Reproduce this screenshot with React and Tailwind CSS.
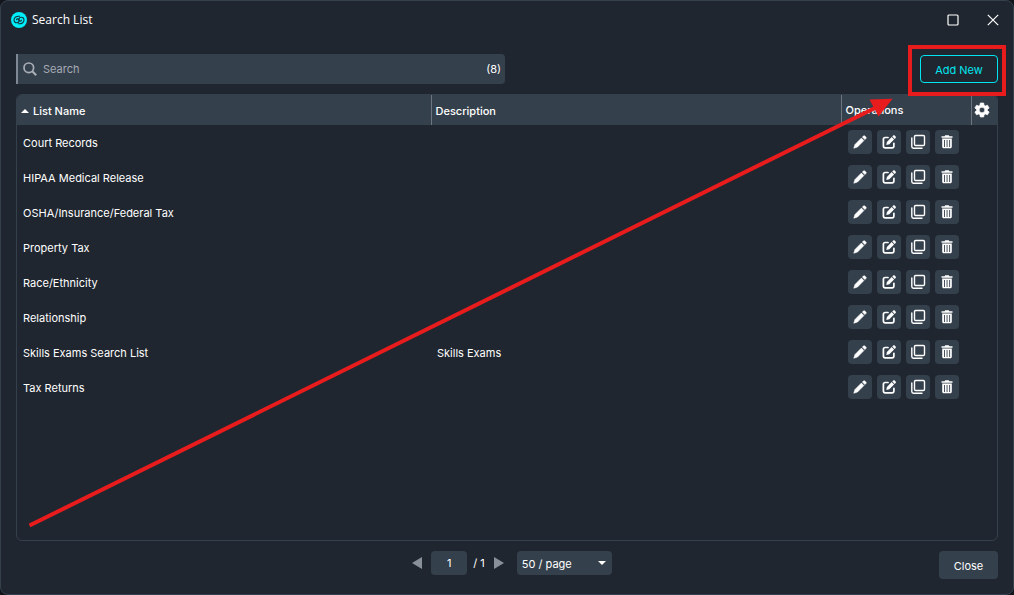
import React, { useState } from 'react';

const LISTS = [
  { name: 'Court Records', description: '' },
  { name: 'HIPAA Medical Release', description: '' },
  { name: 'OSHA/Insurance/Federal Tax', description: '' },
  { name: 'Property Tax', description: '' },
  { name: 'Race/Ethnicity', description: '' },
  { name: 'Relationship', description: '' },
  { name: 'Skills Exams Search List', description: 'Skills Exams' },
  { name: 'Tax Returns', description: '' },
];

function LogoIcon() {
  return (
    <svg className="size-4" viewBox="0 0 16 16" fill="none" aria-hidden="true">
      <circle cx="8" cy="8" r="8" fill="#00eefa" />
      <g stroke="#12303c" strokeWidth="1.1" strokeLinecap="round">
        <path d="M8.600 4.300C5.500 3.800 3 5.600 3 8c0 2 1.600 3 3.100 2.700 1.700-.3 2.200-1.700 2-2.800-.3-1.300-2.300-1.500-2.600-.1" />
        <path d="M7.400 11.700c3.100.5 5.600-1.300 5.600-3.700 0-2-1.600-3-3.100-2.700-1.700.3-2.200 1.700-2 2.800.3 1.300 2.300 1.500 2.600.1" />
      </g>
    </svg>
  );
}

function PencilIcon() {
  return (
    <svg className="size-4" viewBox="0 0 16 16" fill="currentColor" stroke="currentColor" strokeWidth=".6" strokeLinejoin="round" aria-hidden="true">
      <path d="M1.800 14.200l1.200-3.700 6.400-6.400 2.500 2.500-6.400 6.400z" />
      <path d="M10.400 3.100l1-1c.5-.5 1-.5 1.500 0l1 1c.5.5.5 1 0 1.500l-1 1z" />
    </svg>
  );
}

function EditIcon() {
  return (
    <svg className="size-4" viewBox="0 0 16 16" fill="currentColor" aria-hidden="true">
      <path
        d="M7 3.500H4.200c-1.100 0-1.800.7-1.800 1.700v6.900c0 1 .7 1.700 1.800 1.700h6.900c1.100 0 1.800-.7 1.800-1.700V9.300"
        fill="none"
        stroke="currentColor"
        strokeWidth="1.700"
        strokeLinecap="round"
      />
      <path d="M5.300 10.900l.6-3 4.800-4.800 2.400 2.400-4.800 4.800z" />
      <path d="M11.300 2.500l.9-.9c.5-.5 1-.5 1.500 0l.9.9c.5.5.5 1 0 1.500l-.9.9z" />
    </svg>
  );
}

function CopyIcon() {
  return (
    <svg className="size-4" viewBox="0 0 16 16" fill="none" stroke="currentColor" aria-hidden="true">
      <rect x="4.500" y="1.500" width="10" height="10" rx="1.200" strokeWidth="1.400" />
      <path d="M1.800 4v8.600c0 1 .6 1.600 1.600 1.600H12" strokeWidth="1.400" strokeLinecap="round" />
    </svg>
  );
}

function TrashIcon() {
  return (
    <svg className="size-4" viewBox="0 0 16 16" fill="currentColor" aria-hidden="true">
      <path d="M5.600 2.200l.6-.9h3.600l.6.9h3.100v1.500h-11V2.200z" />
      <path
        fillRule="evenodd"
        d="M3.200 4.600h9.600v8.200c0 .9-.6 1.500-1.500 1.500H4.700c-.9 0-1.500-.6-1.500-1.500zM5 6v7h.9V6zm2.600 0v7h.9V6zm2.600 0v7h.9V6z"
      />
    </svg>
  );
}

function GearIcon() {
  return (
    <svg className="size-4" viewBox="0 0 24 24" fill="currentColor" stroke="currentColor" strokeLinejoin="round" aria-hidden="true">
      <path
        d="M9.500 1.500h5l.6 3.300 1.900 1.100 3.200-1.200 2.500 4.300-2.600 2.100v1.800l2.600 2.100-2.500 4.300-3.200-1.200-1.900 1.100-.6 3.300h-5l-.6-3.300L7 18.100l-3.200 1.200L1.300 15l2.600-2.100v-1.800L1.300 9l2.500-4.300L7 5.900l1.900-1.100zM12 7.800a4.200 4.200 0 100 8.400 4.200 4.200 0 000-8.400z"
        fillRule="evenodd"
      />
    </svg>
  );
}

const OPERATIONS = [
  { label: 'Rename', Icon: PencilIcon },
  { label: 'Edit', Icon: EditIcon },
  { label: 'Copy', Icon: CopyIcon },
  { label: 'Delete', Icon: TrashIcon },
];

function TitleBar() {
  return (
    <header className="flex h-[38px] shrink-0 items-center gap-[5px] pl-2.5 pr-3">
      <LogoIcon />
      <h1 className="flex-1 font-['Open_Sans',sans-serif] text-xs">Search List</h1>
      <div className="flex gap-6">
        <button type="button" aria-label="Maximize" className="flex size-4 items-center justify-center">
          <svg className="size-3" viewBox="0 0 12 12" fill="none" stroke="currentColor" aria-hidden="true">
            <rect x="1" y="1" width="10" height="10" rx="1" strokeWidth="1.200" />
          </svg>
        </button>
        <button type="button" aria-label="Close window" className="flex size-4 items-center justify-center">
          <svg className="size-3" viewBox="0 0 12 12" fill="none" stroke="currentColor" aria-hidden="true">
            <path d="M.8.8l10.400 10.400M11.200.8L.8 11.200" strokeWidth="1.200" />
          </svg>
        </button>
      </div>
    </header>
  );
}

function SearchRow({ query, onChange, count }) {
  return (
    <div className="flex items-center justify-between gap-8">
      <label className="flex h-[30px] w-full max-w-[489px] items-center gap-[5px] rounded-r border-l-2 border-[#7f8894] bg-[#35404d] px-1">
        <svg className="size-4 shrink-0 text-[#a9afb7]" viewBox="0 0 16 16" fill="none" stroke="currentColor" aria-hidden="true">
          <circle cx="6.800" cy="6.800" r="4.800" strokeWidth="1.700" />
          <path d="M10.200 10.200l4 4" strokeWidth="2" />
        </svg>
        <input
          type="text"
          aria-label="Search"
          placeholder="Search"
          value={query}
          onChange={(e) => onChange(e.target.value)}
          className="min-w-0 flex-1 bg-transparent outline-none placeholder:text-[#a5abb3]"
        />
        <span>({count})</span>
      </label>
      <div className="relative">
        <button type="button" className="h-7 w-[78px] rounded border border-[#00e5f0] pt-0.5 text-[#00e5f0]">
          Add New
        </button>
        <div className="pointer-events-none absolute -bottom-[13px] -left-3 -right-2 -top-2.5 border-4 border-[#e81c1c]" />
      </div>
    </div>
  );
}

function ListTable({ rows }) {
  return (
    <div className="min-h-0 flex-1 overflow-hidden rounded-md border border-[#35404d]">
      <table className="w-full table-fixed border-collapse text-left">
        <colgroup>
          <col className="w-[414px]" />
          <col />
          <col className="w-[130px]" />
          <col className="w-[26px]" />
        </colgroup>
        <thead className="bg-[#35404d]">
          <tr className="h-[30px]">
            <th className="px-1 pb-0 pt-0.5 font-medium" aria-sort="ascending">
              <span className="flex items-center gap-1">
                <svg className="h-1 w-2" viewBox="0 0 8 4" fill="currentColor" aria-hidden="true">
                  <path d="M4 0l4 4H0z" />
                </svg>
                List Name
              </span>
            </th>
            <th className="border-l border-[#6b747f] px-1 pb-0 pt-0.5 font-medium">Description</th>
            <th className="border-l border-[#6b747f] px-1 py-0 font-medium">Operations</th>
            <th className="border-l border-[#6b747f] p-0">
              <button type="button" aria-label="Table settings" className="flex w-full justify-center pr-1">
                <GearIcon />
              </button>
            </th>
          </tr>
        </thead>
        <tbody>
          {rows.map((row) => (
            <tr key={row.name} className="h-[35px]">
              <td className="px-1.5 py-0">{row.name}</td>
              <td className="px-1.5 py-0">{row.description}</td>
              <td className="pb-0.5 pl-[7px] pr-0 pt-0">
                <div className="flex gap-[5px]">
                  {OPERATIONS.map(({ label, Icon }) => (
                    <button
                      key={label}
                      type="button"
                      aria-label={`${label} ${row.name}`}
                      className="flex size-6 shrink-0 items-center justify-center rounded bg-[#35404d]"
                    >
                      <Icon />
                    </button>
                  ))}
                </div>
              </td>
              <td />
            </tr>
          ))}
        </tbody>
      </table>
    </div>
  );
}

function Pager() {
  return (
    <div className="flex items-center gap-1.5">
      <button type="button" aria-label="Previous page" className="flex size-4 items-center justify-center text-[#8a9099]">
        <svg className="h-3 w-2.5" viewBox="0 0 10 12" fill="currentColor" aria-hidden="true">
          <path d="M10 0v12L0 6z" />
        </svg>
      </button>
      <input
        type="text"
        aria-label="Page"
        defaultValue="1"
        className="h-6 w-9 rounded bg-[#35404d] text-center outline-none"
      />
      <span>/ 1</span>
      <button type="button" aria-label="Next page" className="flex size-4 items-center justify-center text-[#8a9099]">
        <svg className="h-3 w-2.5" viewBox="0 0 10 12" fill="currentColor" aria-hidden="true">
          <path d="M0 0v12l10-6z" />
        </svg>
      </button>
      <div className="relative ml-1">
        <select
          aria-label="Rows per page"
          defaultValue="50"
          className="h-6 w-[95px] appearance-none rounded bg-[#35404d] px-[5px] pt-0.5 outline-none"
        >
          <option value="25">25 / page</option>
          <option value="50">50 / page</option>
          <option value="100">100 / page</option>
        </select>
        <svg
          className="pointer-events-none absolute right-1.5 top-2.5 h-1 w-2"
          viewBox="0 0 8 4"
          fill="currentColor"
          aria-hidden="true"
        >
          <path d="M0 0h8L4 4z" />
        </svg>
      </div>
    </div>
  );
}

function Arrow() {
  return (
    <svg
      className="pointer-events-none absolute left-0 top-0 h-[595px] w-[1014px]"
      viewBox="0 0 1014 595"
      aria-hidden="true"
    >
      <path d="M28.500 524.500L876 106" stroke="#e81c1c" strokeWidth="4" />
      <path d="M868.500 98.500l23-.8-14 17.800z" fill="#e81c1c" />
    </svg>
  );
}

export default function App() {
  const [query, setQuery] = useState('');
  const rows = LISTS.filter((l) => l.name.toLowerCase().includes(query.toLowerCase()));

  return (
    <div className="h-screen overflow-hidden bg-[#12161c]">
      <div className="relative flex h-full flex-col rounded-lg border border-[#35404d] bg-[#20262f] font-['Inter',sans-serif] text-[11px] leading-4 text-white">
        <TitleBar />
        <main className="flex min-h-0 flex-1 flex-col gap-2.5 px-[15px] pt-[15px]">
          <SearchRow query={query} onChange={setQuery} count={rows.length} />
          <ListTable rows={rows} />
        </main>
        <footer className="grid h-[53px] shrink-0 grid-cols-[1fr_auto_1fr] items-start pl-[22px] pr-[15px] pt-2.5">
          <div />
          <Pager />
          <button type="button" className="h-7 w-[59px] justify-self-end rounded bg-[#35404d] pt-0.5">
            Close
          </button>
        </footer>
        <Arrow />
      </div>
    </div>
  );
}
